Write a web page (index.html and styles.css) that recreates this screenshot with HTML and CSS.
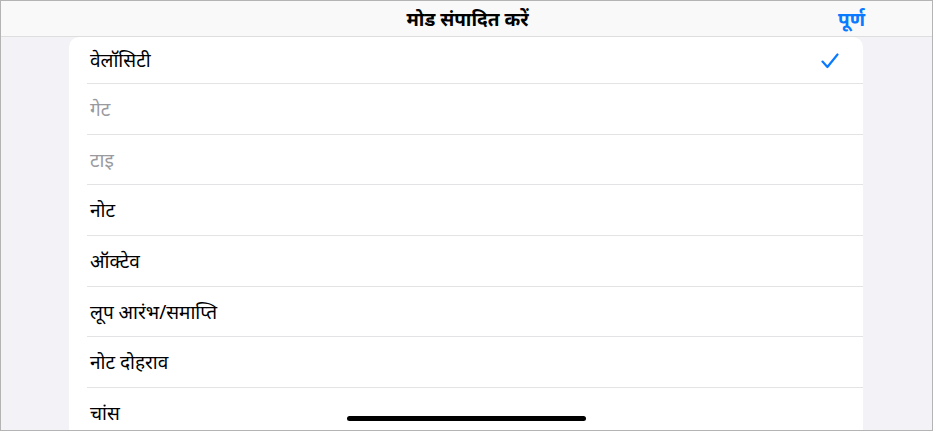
FILE: index.html
```html
<!DOCTYPE html>
<html lang="hi">
<head>
<meta charset="utf-8">
<link rel="stylesheet" href="styles.css">
</head>
<body>
<div class="frame">
  <header class="header">
    <div class="title">मोड संपादित करें</div>
    <div class="done">पूर्ण</div>
  </header>
  <div class="card">
    <div class="row first"><span class="label">वेलॉसिटी</span>
      <svg class="check" width="18" height="16" viewBox="0 0 18 16"><path d="M1.5 8.6 L6.4 14 L16.5 1.5" fill="none" stroke="#0a7aff" stroke-width="2.2" stroke-linecap="round" stroke-linejoin="round"/></svg>
    </div>
    <div class="row"><span class="label dim">गेट</span></div>
    <div class="row"><span class="label dim">टाइ</span></div>
    <div class="row"><span class="label">नोट</span></div>
    <div class="row"><span class="label">ऑक्टेव</span></div>
    <div class="row"><span class="label">लूप आरंभ/समाप्ति</span></div>
    <div class="row"><span class="label">नोट दोहराव</span></div>
    <div class="row"><span class="label">चांस</span></div>
  </div>
  <div class="home"></div>
</div>
</body>
</html>
```
FILE: styles.css
```css
* { box-sizing: border-box; }
html, body { margin: 0; padding: 0; }
body {
  font-family: "Noto Sans", "Liberation Sans", sans-serif;
  width: 934px;
  height: 431px;
  overflow: hidden;
}
.frame {
  position: relative;
  width: 933px;
  height: 431px;
  border: 1px solid #b4b4b4;
  background: #f2f2f7;
  overflow: hidden;
}
.header {
  height: 36px;
  background: #f9f9f9;
  border-bottom: 1px solid #dedede;
  display: grid;
  grid-template-columns: 1fr auto 1fr;
  align-items: center;
}
.title {
  grid-column: 2;
  font-size: 19px;
  font-weight: 700;
  color: #000;
  padding-left: 2px;
}
.done {
  grid-column: 3;
  justify-self: end;
  margin-right: 67px;
  font-size: 19px;
  font-weight: 700;
  color: #0a7aff;
}
.card {
  margin: 0 69px 0 68px;
  background: #fff;
  border-radius: 10px 10px 0 0;
}
.row {
  height: 50.7px;
  margin-left: 18px;
  padding-left: 3px;
  padding-right: 24px;
  border-bottom: 1px solid #e3e3e5;
  display: flex;
  align-items: center;
  justify-content: space-between;
}
.row.first { height: 47px; }
.label {
  font-size: 19px;
  color: #000;
}
.label.dim { color: #9a9a9e; }
.check { display: block; margin-top: 1px; }
.home {
  position: absolute;
  left: 346px;
  top: 415px;
  width: 239px;
  height: 5px;
  border-radius: 3px;
  background: #000;
}
```
